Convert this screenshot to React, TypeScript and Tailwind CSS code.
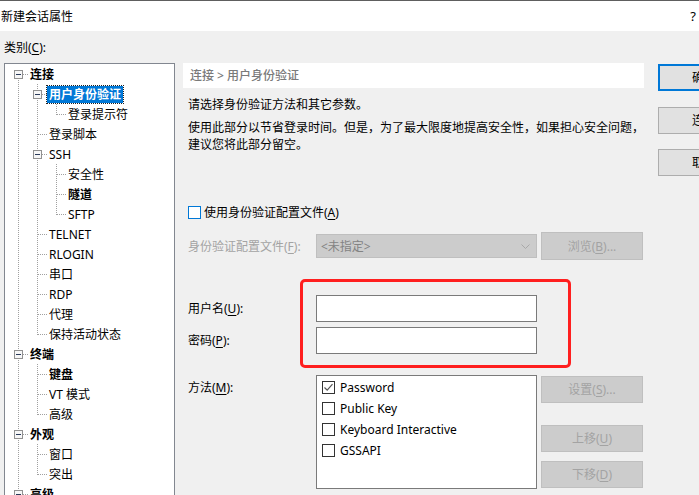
import React from "react";

type G = "I" | "T" | "L" | "F" | " ";

function GuideCell({ g, box }: { g: G; box?: boolean }) {
  return (
    <svg width="19" height="20" className="shrink-0 block" shapeRendering="crispEdges">
      {(g === "I" || g === "T") && (
        <line x1="9.5" y1="0" x2="9.5" y2="20" stroke="#a0a0a0" strokeDasharray="1 1" />
      )}
      {g === "L" && <line x1="9.5" y1="0" x2="9.5" y2="11" stroke="#a0a0a0" strokeDasharray="1 1" />}
      {g === "F" && <line x1="9.5" y1="10" x2="9.5" y2="20" stroke="#a0a0a0" strokeDasharray="1 1" />}
      {(g === "T" || g === "L" || g === "F") && (
        <line x1="10" y1="10.5" x2="19" y2="10.5" stroke="#a0a0a0" strokeDasharray="1 1" />
      )}
      {box && (
        <g>
          <rect x="5.5" y="6.5" width="8" height="8" fill="#f7f7f7" stroke="#919191" />
          <line x1="7" y1="10.5" x2="12" y2="10.5" stroke="#2a3a5a" />
        </g>
      )}
    </svg>
  );
}

type Row = { guides: G[]; box?: boolean; label: string; bold?: boolean; selected?: boolean };

const rows: Row[] = [
  { guides: ["F"], box: true, label: "连接", bold: true },
  { guides: ["I", "T"], box: true, label: "用户身份验证", bold: true, selected: true },
  { guides: ["I", "I", "L"], label: "登录提示符" },
  { guides: ["I", "T"], label: "登录脚本" },
  { guides: ["I", "T"], box: true, label: "SSH" },
  { guides: ["I", "I", "T"], label: "安全性" },
  { guides: ["I", "I", "T"], label: "隧道", bold: true },
  { guides: ["I", "I", "L"], label: "SFTP" },
  { guides: ["I", "T"], label: "TELNET" },
  { guides: ["I", "T"], label: "RLOGIN" },
  { guides: ["I", "T"], label: "串口" },
  { guides: ["I", "T"], label: "RDP" },
  { guides: ["I", "T"], label: "代理" },
  { guides: ["I", "L"], label: "保持活动状态" },
  { guides: ["T"], box: true, label: "终端", bold: true },
  { guides: ["I", "T"], label: "键盘", bold: true },
  { guides: ["I", "T"], label: "VT 模式" },
  { guides: ["I", "L"], label: "高级" },
  { guides: ["T"], box: true, label: "外观", bold: true },
  { guides: ["I", "T"], label: "窗口" },
  { guides: ["I", "L"], label: "突出" },
  { guides: ["L"], box: true, label: "高级", bold: true },
];

function U({ children }: { children: React.ReactNode }) {
  return <span className="underline underline-offset-[2px] decoration-1">{children}</span>;
}

function DisabledButton({ children, className = "" }: { children: React.ReactNode; className?: string }) {
  return (
    <div
      className={`w-[102px] h-[27px] bg-[#cccccc] border border-[#bfbfbf] text-[#a3a3a3] flex items-center justify-center ${className}`}
    >
      {children}
    </div>
  );
}

function Check({ checked }: { checked?: boolean }) {
  return (
    <div className="w-[13px] h-[13px] border border-[#333333] bg-white flex items-center justify-center shrink-0">
      {checked && (
        <svg width="11" height="11" viewBox="0 0 11 11">
          <path d="M1.5 5.5 L4.2 8.2 L9.5 2.2" fill="none" stroke="#555" strokeWidth="1.2" />
        </svg>
      )}
    </div>
  );
}

export default function App() {
  return (
    <div className="relative w-[699px] h-[495px] overflow-hidden bg-[#f0f0f0] text-[12px] text-black font-['Noto_Sans','Noto_Sans_CJK_SC',sans-serif] leading-[17px]">
      {/* title bar */}
      <div className="h-[31px] bg-white border-t border-[#5e5e5e] flex items-center justify-between pl-[1px]">
        <span>新建会话属性</span>
        <span className="text-[13px] mr-[3px]">?</span>
      </div>

      <div className="flex items-start">
        {/* left column */}
        <div className="pl-[4px] pt-[8px]">
          <div className="h-[18px] leading-[18px] mb-[6px]">
            类别(<U>C</U>):
          </div>
          <div className="w-[171px] h-[440px] border border-[#828790] bg-white overflow-hidden pl-[4px]">
            {rows.map((r, i) => (
              <div key={i} className="flex items-center h-[20px]">
                {r.guides.map((g, j) => (
                  <GuideCell key={j} g={g} box={j === r.guides.length - 1 && r.box} />
                ))}
                <span
                  className={`h-[17px] px-[2px] whitespace-nowrap flex items-center ${
                    r.bold ? "font-semibold" : ""
                  } ${r.selected ? "bg-[#0078d7] text-white outline outline-1 outline-dotted outline-[#1f1f1f]" : ""}`}
                >
                  {r.label}
                </span>
              </div>
            ))}
          </div>
        </div>

        {/* main column */}
        <div className="ml-[8px] w-[461px] pt-[32px] shrink-0">
          <div className="h-[25px] bg-white flex items-center pl-[7px] text-[#7a7a7a] font-medium">连接 &gt; 用户身份验证</div>
          <div className="pl-[5px]">
            <p className="mt-[8px]">请选择身份验证方法和其它参数。</p>
            <p className="mt-[6px] whitespace-nowrap">
              使用此部分以节省登录时间。但是，为了最大限度地提高安全性，如果担心安全问题，
              <br />
              建议您将此部分留空。
            </p>

            <div className="mt-[50px] h-[18px] flex items-center">
              <div className="w-[13px] h-[13px] border border-[#0078d7] bg-white shrink-0" />
              <span className="ml-[3px]">
                使用身份验证配置文件(<U>A</U>)
              </span>
            </div>

            <div className="mt-[11px] h-[28px] flex items-center">
              <div className="w-[128px] text-[#a3a3a3]">
                身份验证配置文件(<U>F</U>):
              </div>
              <div className="w-[221px] h-[24px] bg-[#cccccc] border border-[#bfbfbf] flex items-center justify-between pl-[4px] pr-[6px] text-[#838383]">
                <span>&lt;未指定&gt;</span>
                <svg width="9" height="5" viewBox="0 0 9 5">
                  <path d="M0.5 0.5 L4.5 4.5 L8.5 0.5" fill="none" stroke="#a8a8a8" />
                </svg>
              </div>
              <DisabledButton className="ml-[4px] h-[28px]">
                浏览(<U>B</U>)...
              </DisabledButton>
            </div>

            <div className="mt-[35px] h-[27px] flex items-center">
              <div className="w-[128px]">
                用户名(<U>U</U>):
              </div>
              <div className="w-[221px] h-[27px] bg-white border border-[#7a7a7a]" />
            </div>
            <div className="mt-[5px] h-[27px] flex items-center">
              <div className="w-[128px]">
                密码(<U>P</U>):
              </div>
              <div className="w-[221px] h-[27px] bg-white border border-[#7a7a7a]" />
            </div>

            <div className="mt-[21px] flex items-start">
              <div className="w-[128px] pt-[4px]">
                方法(<U>M</U>):
              </div>
              <div className="w-[221px] h-[114px] bg-white border border-[#7a7a7a] pt-[1px] pl-[5px]">
                {[
                  { t: "Password", c: true },
                  { t: "Public Key" },
                  { t: "Keyboard Interactive" },
                  { t: "GSSAPI" },
                ].map((it) => (
                  <div key={it.t} className="h-[21px] flex items-center">
                    <Check checked={it.c} />
                    <span className="ml-[5px]">{it.t}</span>
                  </div>
                ))}
              </div>
              <div className="ml-[4px] flex flex-col">
                <DisabledButton className="mt-[1px]">
                  设置(<U>S</U>)...
                </DisabledButton>
                <DisabledButton className="mt-[22px]">
                  上移(<U>U</U>)
                </DisabledButton>
                <DisabledButton className="mt-[9px]">
                  下移(<U>D</U>)
                </DisabledButton>
              </div>
            </div>
          </div>
        </div>

        {/* right buttons */}
        <div className="ml-[14px] pt-[33px] flex flex-col shrink-0">
          <div className="w-[92px] h-[27px] bg-[#e1e1e1] border-2 border-[#0078d7] flex items-center justify-center">确定</div>
          <div className="mt-[16px] w-[92px] h-[27px] bg-[#e1e1e1] border border-[#adadad] flex items-center justify-center">连接</div>
          <div className="mt-[15px] w-[92px] h-[27px] bg-[#e1e1e1] border border-[#adadad] flex items-center justify-center">取消</div>
        </div>
      </div>

      {/* annotation */}
      <div className="absolute left-[300px] top-[279px] w-[271px] h-[89px] border-[3px] border-[#ff1f1f] rounded-[5px]" />
    </div>
  );
}
